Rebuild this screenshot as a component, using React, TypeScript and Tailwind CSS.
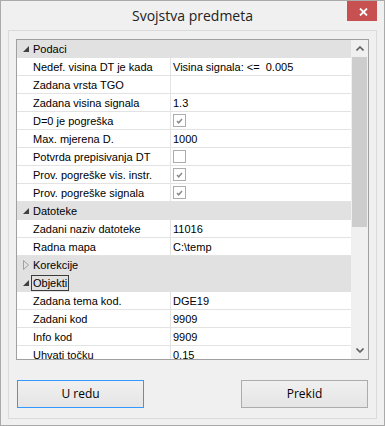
import React from "react";

type Row =
  | { cat: string; open: boolean; focus?: boolean }
  | { name: string; value?: string; check?: boolean };

const rows: Row[] = [
  { cat: "Podaci", open: true },
  { name: "Nedef. visina DT je kada", value: "Visina signala: <=  0.005" },
  { name: "Zadana vrsta TGO", value: "" },
  { name: "Zadana visina signala", value: "1.3" },
  { name: "D=0 je pogreška", check: true },
  { name: "Max. mjerena D.", value: "1000" },
  { name: "Potvrda prepisivanja DT", check: false },
  { name: "Prov. pogreške vis. instr.", check: true },
  { name: "Prov. pogreške signala", check: true },
  { cat: "Datoteke", open: true },
  { name: "Zadani naziv datoteke", value: "11016" },
  { name: "Radna mapa", value: "C:\\temp" },
  { cat: "Korekcije", open: false },
  { cat: "Objekti", open: true, focus: true },
  { name: "Zadana tema kod.", value: "DGE19" },
  { name: "Zadani kod", value: "9909" },
  { name: "Info kod", value: "9909" },
  { name: "Uhvati točku", value: "0.15" },
];

function Glyph({ open }: { open: boolean }) {
  if (open) {
    return (
      <svg width="6" height="6" viewBox="0 0 6 6" className="block">
        <polygon points="6,0 6,6 0,6" fill="#404040" />
      </svg>
    );
  }
  return (
    <svg width="6" height="10" viewBox="0 0 6 10" className="block">
      <polygon points="0.5,0.5 5.5,5 0.5,9.5" fill="none" stroke="#a0a0a0" strokeWidth="1" />
    </svg>
  );
}

function CheckBox({ checked }: { checked: boolean }) {
  return (
    <span className="w-[13px] h-[13px] border border-[#acacac] bg-white flex items-center justify-center">
      {checked && (
        <svg width="9" height="8" viewBox="0 0 9 8">
          <path d="M2 4 L3.7 5.8 L7 2" fill="none" stroke="#8a8a8a" strokeWidth="1.5" />
        </svg>
      )}
    </span>
  );
}

function GridRow({ row }: { row: Row }) {
  if ("cat" in row) {
    return (
      <div className="h-[18px] shrink-0 bg-[#e1e1e1] flex items-center">
        <span className="w-[16px] flex justify-center pl-[1px]">
          <Glyph open={row.open} />
        </span>
        <span
          className={`h-[16px] flex items-center pt-[1px] px-[1px] -ml-[2px] ${
            row.focus ? "border border-[#3c3c3c]" : "border border-transparent"
          }`}
        >
          {row.cat}
        </span>
      </div>
    );
  }
  return (
    <div className="h-[18px] shrink-0 flex border-b border-[#e3e3e3] bg-white">
      <div className="w-[154px] shrink-0 pl-[16px] pt-[1px] flex items-center border-r border-[#e3e3e3] whitespace-nowrap">
        {row.name}
      </div>
      <div className="flex-1 pl-[2px] flex items-center whitespace-pre">
        {row.check !== undefined ? (
          <CheckBox checked={row.check} />
        ) : (
          <span className="pt-[1px]">{row.value}</span>
        )}
      </div>
    </div>
  );
}

function ScrollBar() {
  return (
    <div className="w-[17px] shrink-0 bg-[#f0f0f0] flex flex-col">
      <div className="h-[17px] flex items-center justify-center">
        <svg width="8" height="5" viewBox="0 0 8 5">
          <path d="M0.5 4.5 L4 1 L7.5 4.5" fill="none" stroke="#606060" strokeWidth="1.6" />
        </svg>
      </div>
      <div className="h-[170px] mx-[1px] bg-[#cdcdcd]" />
      <div className="flex-1" />
      <div className="h-[17px] flex items-center justify-center">
        <svg width="8" height="5" viewBox="0 0 8 5">
          <path d="M0.5 0.5 L4 4 L7.5 0.5" fill="none" stroke="#606060" strokeWidth="1.6" />
        </svg>
      </div>
    </div>
  );
}

export default function App() {
  return (
    <div className="w-[385px] h-[426px] border border-[#aaaaaa] bg-[#f0f0f0] flex flex-col font-['Liberation_Sans',Arial,sans-serif] text-black">
      <div className="relative h-[29px] shrink-0 flex items-center justify-center">
        <span className="text-[14px] text-[#222] font-['Open_Sans',sans-serif] leading-none mt-[1px]">
          Svojstva predmeta
        </span>
        <div className="absolute top-0 right-[7px] w-[30px] h-[20px] bg-[#c75050] flex items-center justify-center">
          <svg width="9" height="8" viewBox="0 0 9 8" className="mt-[2px] ml-[2px]">
            <path d="M1 0.5 L8 7.5 M8 0.5 L1 7.5" stroke="white" strokeWidth="1.8" />
          </svg>
        </div>
      </div>

      <div className="mx-[7px] h-[389px] shrink-0 border border-[#dadada] flex flex-col">
        <div className="mx-[7px] mt-[8px] h-[321px] shrink-0 border border-[#a0a0a0] bg-white flex text-[11px]">
          <div className="flex-1 flex flex-col overflow-hidden">
            {rows.map((r, i) => (
              <GridRow key={i} row={r} />
            ))}
          </div>
          <ScrollBar />
        </div>

        <div className="mt-[20px] px-[8px] flex justify-between text-[12px] font-['Open_Sans',sans-serif]">
          <button className="w-[127px] h-[28px] border border-[#3399ff] bg-gradient-to-b from-[#f0f0f0] to-[#e5e5e5] flex items-center justify-center">
            U redu
          </button>
          <button className="w-[127px] h-[28px] border border-[#acacac] bg-gradient-to-b from-[#f0f0f0] to-[#e5e5e5] flex items-center justify-center">
            Prekid
          </button>
        </div>
      </div>
    </div>
  );
}
